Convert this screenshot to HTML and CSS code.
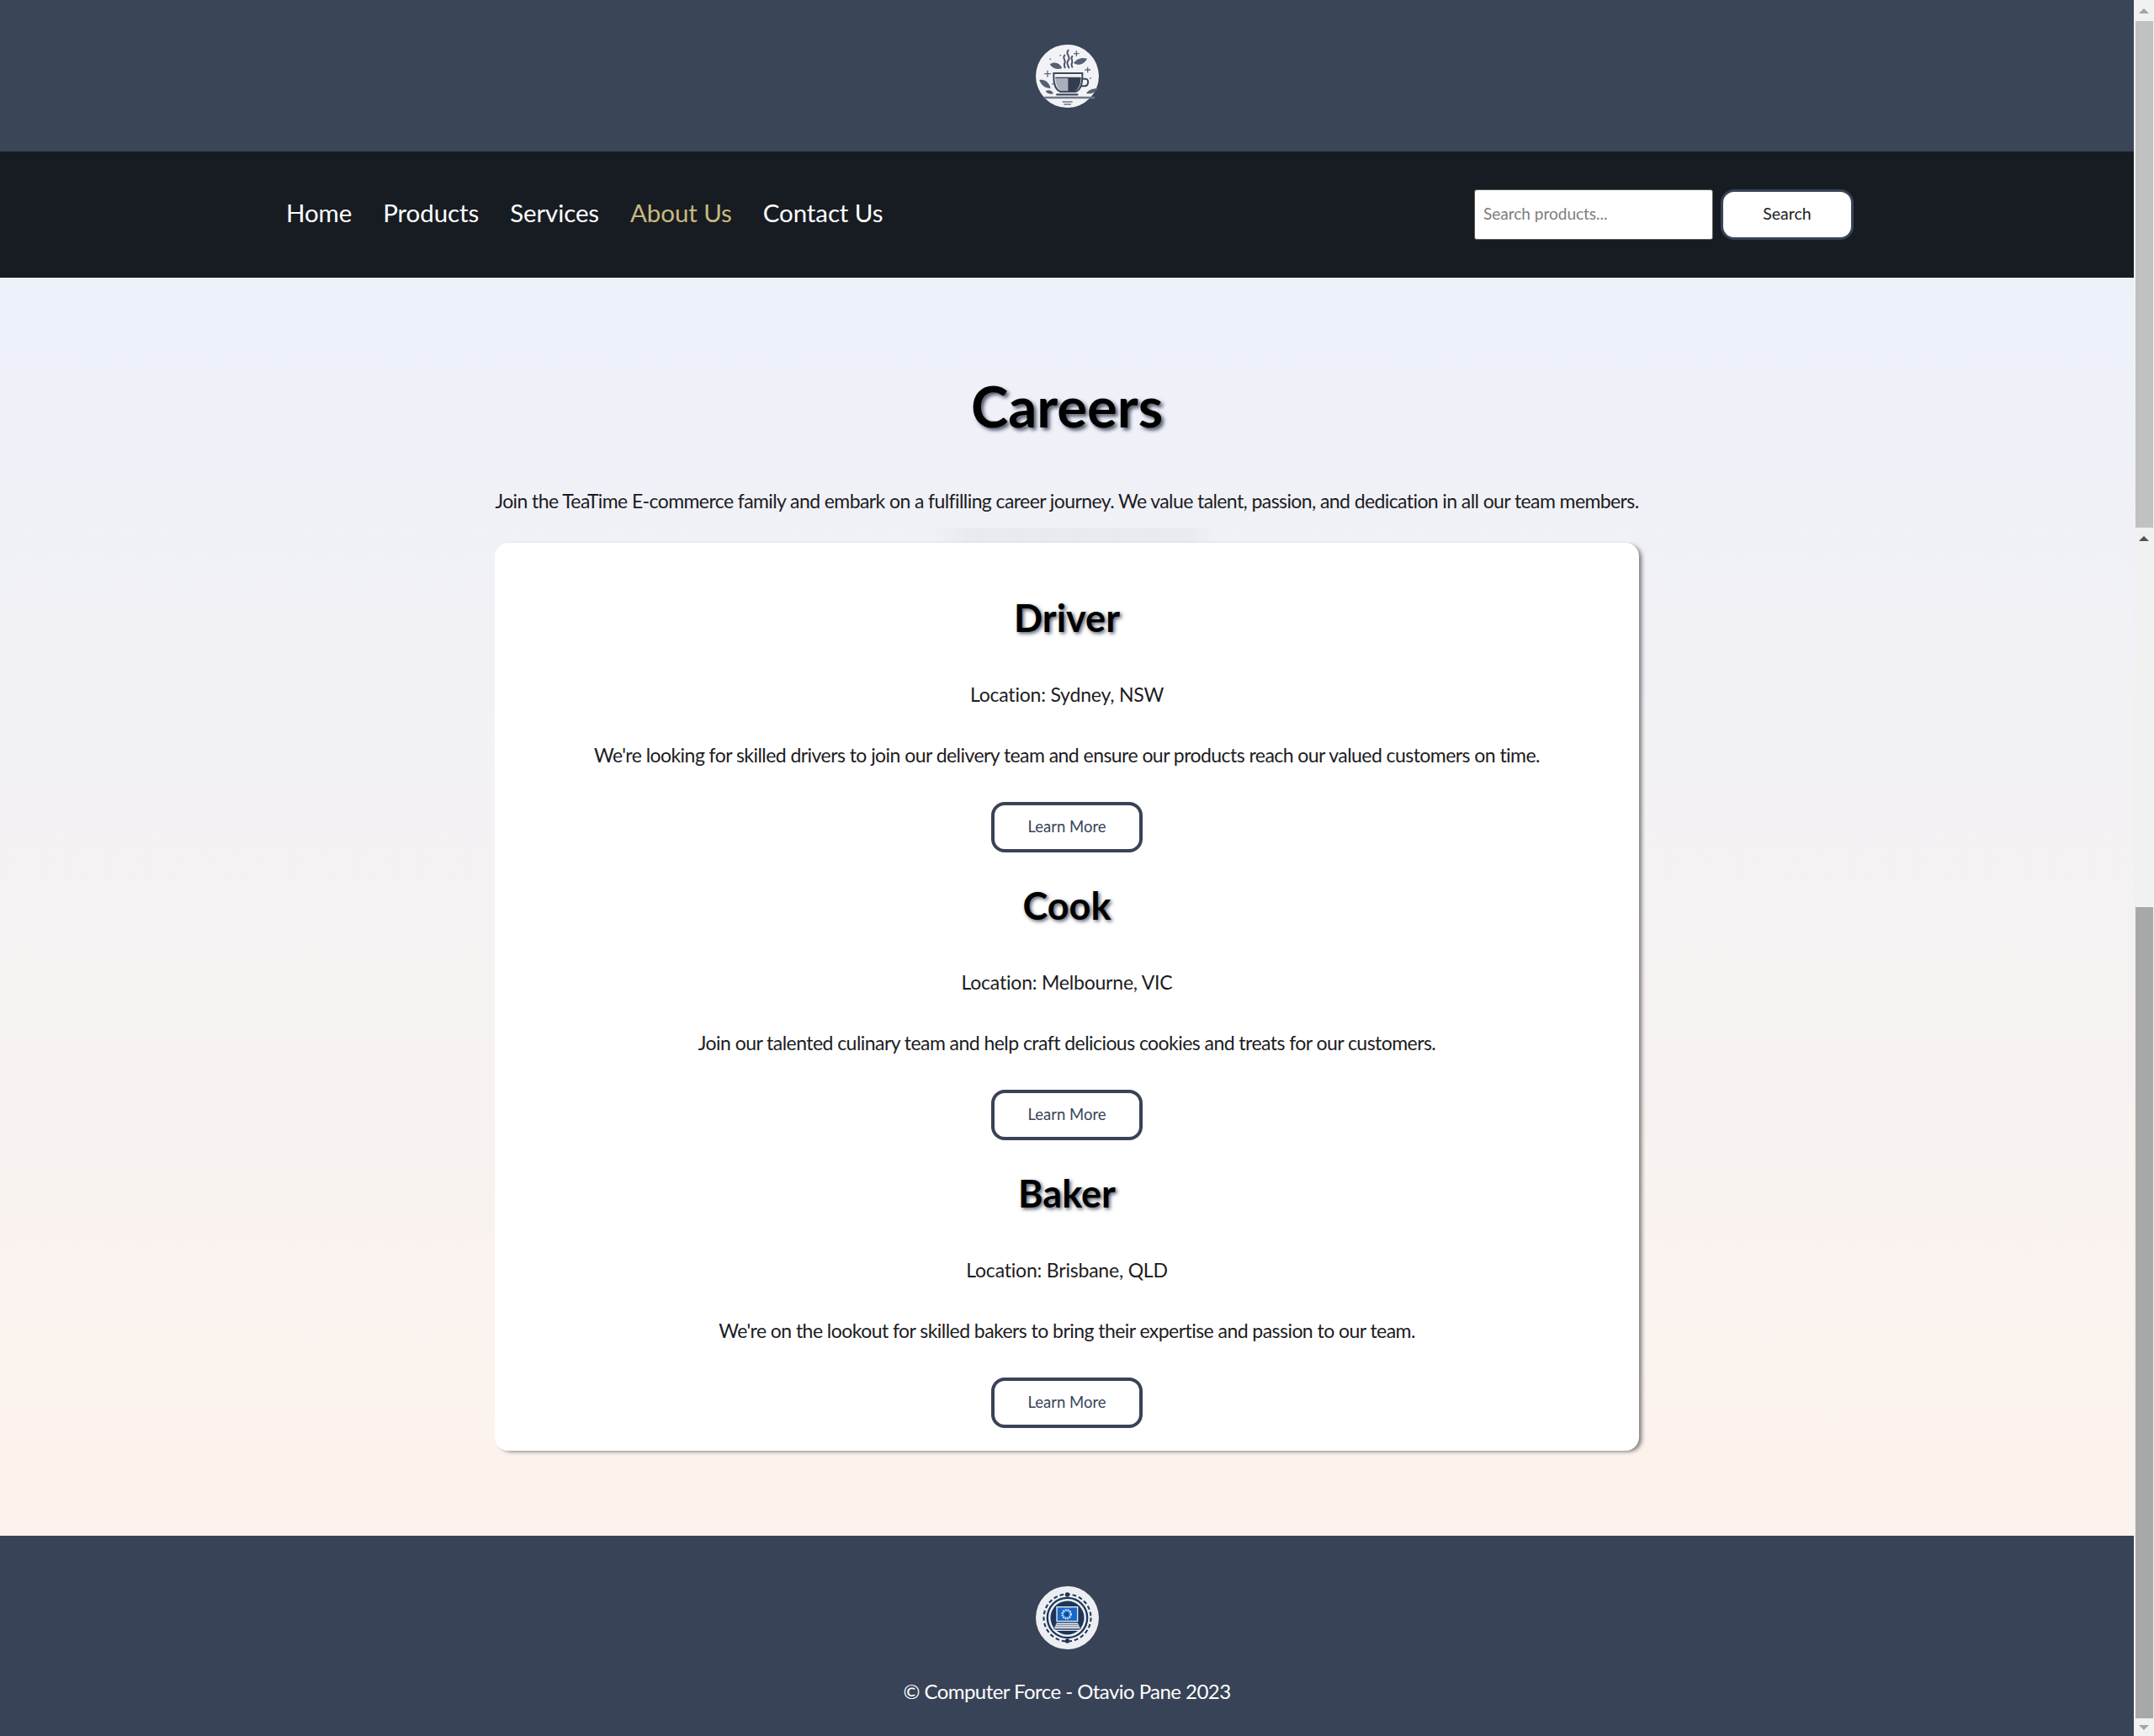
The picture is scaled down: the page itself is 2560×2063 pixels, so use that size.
FILE: index.html
```html
<!DOCTYPE html>
<html lang="en">
<head>
    <meta charset="UTF-8">
    <meta name="viewport" content="width=device-width, initial-scale=1.0">
    <title>Careers</title>
    <link rel="stylesheet" href="styles.css">
</head>
<body>

<div class="page">
    <header class="site-header">
        <svg class="logo" viewBox="0 0 225 225" role="img" aria-label="TeaTime logo">
            <circle cx="112.5" cy="112.5" r="112.5" fill="#f2f3f6"/>
            <!-- steam -->
            <path d="M116 20c-14 14 12 22 0 36c-6 8-4 14 2 26M103 38c-10 10 6 18 0 28c-3 6-1 10 1 16M130 42c-8 8 4 14-1 24c-3 6-1 10 1 14" fill="none" stroke="#4a5365" stroke-width="6" stroke-linecap="round"/>
            <!-- leaves -->
            <path d="M50 70c16-10 34-6 44 14c-18 6-34 2-44-14z" fill="#566073"/>
            <path d="M135 66c10-16 30-22 48-16c-8 18-30 28-48 16z" fill="#566073"/>
            <path d="M13 126c18-4 35 8 40 30c-20 0-35-12-40-30z" fill="#566073"/>
            <path d="M35 166c10-6 22-4 28 8c-12 4-22 2-28-8z" fill="#566073"/>
            <path d="M180 174c6-12 24-18 42-18c-4 12-24 22-42 18z" fill="#566073"/>
            <!-- sparkles -->
            <path d="M42 92v24M30 104h24M145 22v20M135 32h20M185 80v20M175 90h20" stroke="#5f687a" stroke-width="4"/>
            <circle cx="52" cy="52" r="3" fill="#7b8392"/><circle cx="88" cy="38" r="3" fill="#7b8392"/><circle cx="195" cy="120" r="3" fill="#7b8392"/><circle cx="60" cy="140" r="3" fill="#7b8392"/>
            <!-- cup -->
            <path d="M64 102h102v12c0 26-8 48-24 54h-54c-16-6-24-28-24-54z" fill="#f2f3f6" stroke="#3f4859" stroke-width="6"/>
            <path d="M70 118h46v47h-26c-12-6-19-24-20-47z" fill="#a9afbb"/>
            <path d="M115 118h46c-1 23-8 41-20 47h-26z" fill="#333c50"/>
            <path d="M70 118h90" stroke="#3f4859" stroke-width="4"/>
            <path d="M164 122h14c12 0 12 25-4 26h-14" fill="none" stroke="#3f4859" stroke-width="6"/>
            <!-- saucer and table -->
            <path d="M76 178h72" stroke="#3f4859" stroke-width="7" stroke-linecap="round"/>
            <path d="M30 189h180" stroke="#6f7787" stroke-width="7"/>
            <path d="M95 204h36M100 213h26" stroke="#6f7787" stroke-width="4"/>
        </svg>
    </header>

    <nav class="site-nav">
        <ul class="nav-links">
            <li><a href="#">Home</a></li>
            <li><a href="#">Products</a></li>
            <li><a href="#">Services</a></li>
            <li><a href="#" class="active">About Us</a></li>
            <li><a href="#">Contact Us</a></li>
        </ul>
        <form class="search-form">
            <input type="text" class="search-input" placeholder="Search products...">
            <button type="button" class="search-btn">Search</button>
        </form>
    </nav>

    <main class="careers">
        <h1>Careers</h1>
        <p class="intro">Join the TeaTime E-commerce family and embark on a fulfilling career journey. We value talent, passion, and dedication in all our team members.</p>

        <section class="jobs">
            <article class="job">
                <h2>Driver</h2>
                <p class="location">Location: Sydney, NSW</p>
                <p class="desc">We're looking for skilled drivers to join our delivery team and ensure our products reach our valued customers on time.</p>
                <a href="#" class="learn-btn">Learn More</a>
            </article>
            <article class="job">
                <h2>Cook</h2>
                <p class="location">Location: Melbourne, VIC</p>
                <p class="desc">Join our talented culinary team and help craft delicious cookies and treats for our customers.</p>
                <a href="#" class="learn-btn">Learn More</a>
            </article>
            <article class="job">
                <h2>Baker</h2>
                <p class="location">Location: Brisbane, QLD</p>
                <p class="desc">We're on the lookout for skilled bakers to bring their expertise and passion to our team.</p>
                <a href="#" class="learn-btn">Learn More</a>
            </article>
        </section>
    </main>

    <footer class="site-footer">
        <svg class="logo" viewBox="0 0 225 225" role="img" aria-label="Computer Force logo">
            <circle cx="112.5" cy="112.5" r="112.5" fill="#eceef3"/>
            <circle cx="112.5" cy="112.5" r="84" fill="none" stroke="#1d3557" stroke-width="6" stroke-dasharray="14 9"/>
            <circle cx="112.5" cy="112.5" r="71" fill="none" stroke="#1d3557" stroke-width="7"/>
            <circle cx="112.5" cy="112.5" r="60" fill="#1d3557"/>
            <circle cx="112.5" cy="30" r="8" fill="#1d3557"/>
            <circle cx="112.5" cy="195" r="8" fill="#1d3557"/>
            <!-- laptop -->
            <rect x="73" y="72" width="78" height="55" fill="#eceef3"/>
            <rect x="77" y="76" width="70" height="47" fill="#1769c9"/>
            <circle cx="110" cy="100" r="15" fill="none" stroke="#e6f0fb" stroke-width="7" stroke-dasharray="5 3"/>
            <circle cx="110" cy="100" r="6" fill="#0d3f85"/>
            <path d="M74 130h76l10 22H64z" fill="#eceef3" stroke="#1d3557" stroke-width="2"/>
            <path d="M74 137h76M70 144h84" stroke="#1d3557" stroke-width="2"/>
            <path d="M62 157h100" stroke="#eceef3" stroke-width="4"/>
        </svg>
        <p class="copyright">© Computer Force - Otavio Pane 2023</p>
    </footer>
</div>

<div class="scrollbar">
    <div class="sb-btn"><span class="arrow-up"></span></div>
    <div class="sb-thumb sb-thumb-light"></div>
    <div class="sb-track">
        <span class="arrow-up arrow-dark"></span>
    </div>
    <div class="sb-thumb sb-thumb-dark"></div>
    <div class="sb-btn"><span class="arrow-down"></span></div>
</div>

</body>
</html>
```

FILE: styles.css
```css
* {
    box-sizing: border-box;
}
html, body {
    margin: 0;
    padding: 0;
}
body {
    display: flex;
    height: 2063px;
    overflow: hidden;
    font-family: "Lato", sans-serif;
    color: #1c1c22;
}
.page {
    flex: 1;
    display: flex;
    flex-direction: column;
    min-width: 0;
}
.logo {
    display: block;
    width: 75px;
    height: 75px;
}

/* header + nav */
.site-header {
    height: 180px;
    background-color: #3a4557;
    display: flex;
    align-items: center;
    justify-content: center;
}
.site-nav {
    height: 150px;
    background-color: #171c22;
    display: flex;
    align-items: center;
    justify-content: space-between;
    padding: 0 333px 0 340px;
}
.nav-links {
    display: flex;
    gap: 37px;
    list-style: none;
    margin: 0;
    padding: 0 0 6px;
}
.nav-links a {
    color: #fff;
    font-size: 29.5px;
    letter-spacing: -0.1px;
    text-decoration: none;
}
.nav-links a.active {
    color: #c9b97f;
}
.search-form {
    display: flex;
    gap: 9px;
}
.search-input {
    width: 284px;
    height: 60px;
    padding: 0 10px 3px;
    border: 1px solid #555;
    border-radius: 3px;
    background: #fff;
    font-family: inherit;
    font-size: 19px;
}
.search-input::placeholder {
    color: #7d7d7d;
}
.search-btn {
    width: 158px;
    height: 60px;
    padding: 0 0 3px;
    border: 3px solid #384357;
    border-radius: 16px;
    background: #fff;
    color: #1c1c22;
    font-family: inherit;
    font-size: 19.5px;
}

/* careers content */
.careers {
    padding: 112px 0 101px;
    background: linear-gradient(#edf1fa, #fdf3ec);
}
.careers h1 {
    margin: 0;
    height: 80px;
    line-height: 80px;
    text-align: center;
    font-size: 67px;
    font-weight: 700;
    color: #000;
    text-shadow: 3px 3px 4px rgba(40, 50, 70, 0.8);
}
.intro {
    position: relative;
    width: 1360px;
    height: 30px;
    margin: 58px auto 35px;
    line-height: 30px;
    font-size: 23px;
    letter-spacing: -0.59px;
    text-align: center;
    white-space: nowrap;
}
/* faint strip of shadow left over under the intro */
.intro::after {
    content: "";
    position: absolute;
    left: 520px;
    top: 47px;
    width: 340px;
    height: 18px;
    background: linear-gradient(90deg, transparent, rgba(40, 50, 70, 0.035) 12%, rgba(40, 50, 70, 0.035) 88%, transparent);
}
.jobs {
    position: relative;
    width: 1360px;
    margin: 0 auto;
    padding: 59px 0 27px;
    background: #fff;
    border-radius: 16px;
    box-shadow: 4px 2px 5px -1px rgba(0, 0, 0, 0.5);
    text-align: center;
}
.job {
    display: flex;
    flex-direction: column;
    align-items: center;
    height: 342px;
}
.job:last-child {
    height: auto;
}
.job h2 {
    margin: 0;
    height: 60px;
    line-height: 60px;
    font-size: 45px;
    font-weight: 700;
    color: #000;
    text-shadow: 2px 2px 4px rgba(40, 50, 70, 0.8);
}
.location, .desc {
    margin: 0;
    height: 30px;
    line-height: 30px;
    font-size: 23px;
    letter-spacing: -0.55px;
}
.location {
    margin-top: 46px;
    letter-spacing: -0.2px;
}
.desc {
    margin-top: 42px;
}
.learn-btn {
    display: flex;
    align-items: center;
    justify-content: center;
    width: 180px;
    height: 60px;
    margin-top: 41px;
    padding-bottom: 2px;
    border: 4px solid #384357;
    border-radius: 16px;
    color: #384357;
    font-size: 18.5px;
    text-decoration: none;
}

/* footer */
.site-footer {
    flex: 1;
    background-color: #384357;
    display: flex;
    flex-direction: column;
    align-items: center;
    padding-top: 60px;
}
.copyright {
    margin: 35px 0 0;
    height: 30px;
    line-height: 30px;
    color: #fff;
    font-size: 24px;
    letter-spacing: -0.55px;
}

/* the two browser scrollbars in the capture */
.scrollbar {
    flex: 0 0 24px;
    display: flex;
    flex-direction: column;
    align-items: center;
    background: #f1f1f1;
}
.sb-btn {
    flex: 0 0 25px;
    display: flex;
    align-items: center;
    justify-content: center;
}
.sb-btn:last-child {
    flex-basis: 21px;
}
.sb-thumb {
    width: 21px;
}
.sb-thumb-light {
    height: 602px;
    background: #c1c1c1;
}
.sb-thumb-dark {
    height: 964px;
    background: #a8a8a8;
}
.sb-track {
    height: 451px;
    padding-top: 10px;
    display: flex;
    justify-content: center;
}
.arrow-up, .arrow-down {
    width: 0;
    height: 0;
    border-left: 6px solid transparent;
    border-right: 6px solid transparent;
}
.arrow-up {
    border-bottom: 6px solid #a3a3a3;
}
.arrow-down {
    border-top: 6px solid #a3a3a3;
}
.arrow-dark {
    border-bottom-color: #505050;
}
```
